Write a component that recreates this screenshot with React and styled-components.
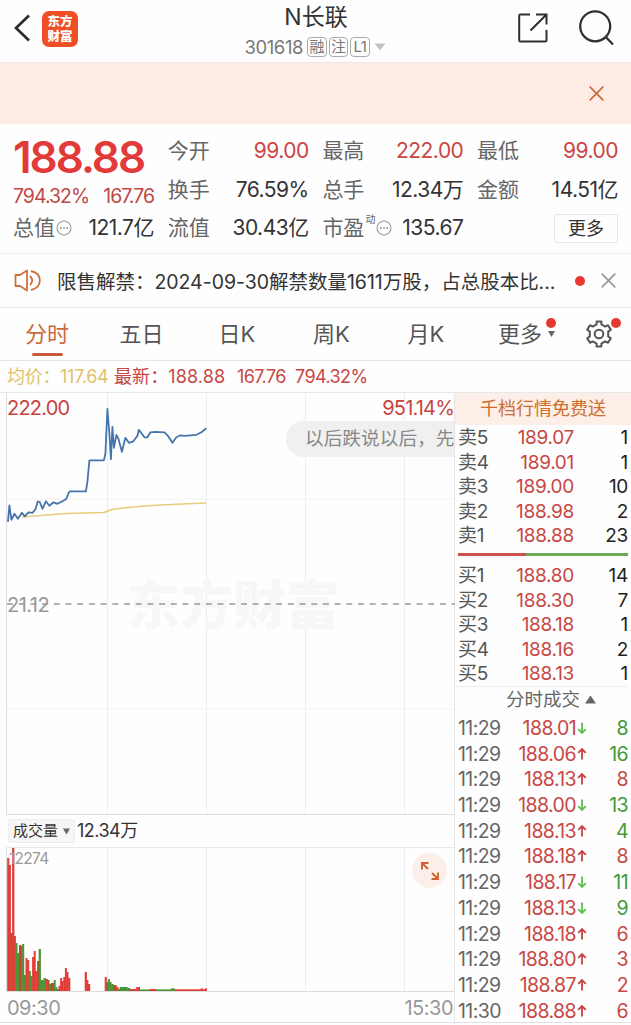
import styled, { createGlobalStyle } from 'styled-components'

const sells = [
  ['卖5', '189.07', '1'],
  ['卖4', '189.01', '1'],
  ['卖3', '189.00', '10'],
  ['卖2', '188.98', '2'],
  ['卖1', '188.88', '23'],
]

const buys = [
  ['买1', '188.80', '14'],
  ['买2', '188.30', '7'],
  ['买3', '188.18', '1'],
  ['买4', '188.16', '2'],
  ['买5', '188.13', '1'],
]

// time, price, direction, volume, volume colour
const trades = [
  ['11:29', '188.01', 'down', '8', 'green'],
  ['11:29', '188.06', 'up', '16', 'green'],
  ['11:29', '188.13', 'up', '8', 'red'],
  ['11:29', '188.00', 'down', '13', 'green'],
  ['11:29', '188.13', 'up', '4', 'green'],
  ['11:29', '188.18', 'up', '8', 'red'],
  ['11:29', '188.17', 'down', '11', 'green'],
  ['11:29', '188.13', 'down', '9', 'green'],
  ['11:29', '188.18', 'up', '6', 'red'],
  ['11:29', '188.80', 'up', '3', 'red'],
  ['11:29', '188.87', 'up', '2', 'red'],
  ['11:30', '188.88', 'up', '6', 'red'],
]

// x, width, height, colour
const bars = [
  [0.5, 1.7, 133, 'r'], [2.2, 1.6, 126, 'r'], [3.8, 1.6, 58, 'm'],
  [5.4, 1.9, 143, 'r'], [7.3, 1.5, 55, 'r'], [8.8, 1.6, 48, 'g'],
  [10.4, 1.8, 38, 'g'], [12.2, 1.7, 46, 'm'], [13.9, 1.6, 45, 'r'],
  [15.5, 1.6, 47, 'g'], [17.1, 1.7, 16, 'g'], [18.8, 1.6, 33, 'r'],
  [20.4, 1.7, 31, 'r'], [22.1, 1.6, 20, 'g'], [23.7, 1.7, 15, 'g'],
  [25.4, 1.6, 34, 'r'], [27, 1.6, 40, 'r'], [28.6, 1.8, 20, 'r'],
  [30.4, 1.6, 30, 'm'], [32, 1.8, 42, 'g'], [33.8, 3, 11, 'g'],
  [36.8, 2, 13, 'g'], [38.8, 2, 12, 'r'], [40.8, 1.6, 11, 'm'],
  [42.4, 1.6, 7, 'g'], [44, 3, 8, 'm'], [47, 1.6, 11, 'g'],
  [48.6, 1.6, 4, 'g'], [50.2, 1.6, 2, 'g'], [51.8, 1.6, 5, 'r'],
  [53.4, 1.6, 13, 'r'], [55, 1.6, 10, 'r'], [56.6, 1.6, 14, 'r'],
  [58.2, 1.6, 23, 'r'], [59.8, 1.6, 19, 'r'], [61.4, 1.8, 13, 'r'],
  [78, 1.8, 19, 'r'], [79.8, 1.5, 11, 'r'], [81.3, 1.8, 7, 'r'],
  [98, 1.7, 14, 'r'], [99.7, 1.4, 9, 'm'], [101.1, 1.7, 12, 'g'],
  [102.8, 1.7, 9, 'g'], [104.5, 2, 7, 'g'], [106.5, 3, 6, 'm'],
  [109.5, 2, 4, 'r'], [111.5, 1.6, 2, 'g'], [113.1, 7.4, 4, 'g'],
  [120.5, 2.6, 3, 'g'], [123.1, 6.4, 2, 'r'], [129.5, 3.4, 4, 'r'],
  [132.9, 10, 1.6, 'g'], [142.9, 6, 2, 'r'], [148.9, 15, 1.6, 'g'],
  [163.9, 4, 2.6, 'g'], [167.9, 26, 1.7, 'r'], [193.9, 2, 2.6, 'r'],
  [195.9, 2, 1.6, 'r'], [197.9, 2, 2.6, 'r'],
]

const barColors = { r: '#e23c38', g: '#479534', m: '#b5502d' }

const priceLine =
  'M1.5 124 L2 119 L3 107.5 L5 122 L8 116 L11.5 121 L15.5 115 L18.5 118.5 L22 114.5 L26 115 L29 111.5 L31.5 103.5 L33.5 104.5 L36 111 L39.5 103.5 L43 108 L47 104.5 L51 106 L57 103 L60 101 L62.5 94.5 L63.5 93.5 L79.5 93.5 L81 84 L83 62.5 L97.5 62.5 L99 56 L101 11 L103 36 L104.5 61.5 L106 29 L107.5 50 L110 37 L112 41 L115.5 54 L119 40 L122.5 45 L127 43.5 L131 38 L132.5 32 L138 39.5 L141 39.5 L144 34.5 L149 34 L158 34.5 L161.5 38 L166 45 L170 39.5 L174 37.5 L178 38 L190 37 L195 34.5 L200 30.5'

function App() {
  return (
    <>
      <GlobalStyle />
      <Page>
        <Header />
        <Banner>
          <Cross size={15} color='#cf6a43' />
        </Banner>
        <Stats />
        <Notice>
          <Speaker />
          <p>限售解禁：2024-09-30解禁数量1611万股，占总股本比...</p>
          <Dot $size={10} />
          <Cross size={15} color='#999' />
        </Notice>
        <Tabs />
        <Legend>
          <span className='avg'>均价：117.64</span>
          <span className='last'>最新：188.88</span>
          <span className='change'>167.76</span>
          <span className='rate'>794.32%</span>
        </Legend>
        <Main>
          <Charts />
          <OrderBook />
        </Main>
      </Page>
    </>
  )
}

const Header = () => (
  <TopBar>
    <svg width='17' height='28' viewBox='0 0 17 28' fill='none'>
      <path d='M15 1.5 L2 14 L15 26.5' stroke='#2b2b2b' strokeWidth='2.7' />
    </svg>
    <Logo>
      <span>东方</span>
      <span>财富</span>
    </Logo>
    <Title>
      <h1>N长联</h1>
      <div>
        <Code>301618</Code>
        <Tag>融</Tag>
        <Tag>注</Tag>
        <Tag>L1</Tag>
        <svg width='12' height='8'>
          <path d='M0.5 0.5 H11.5 L6 7.5Z' fill='#c4c4c4' />
        </svg>
      </div>
    </Title>
    <svg width='30' height='30' viewBox='0 0 30 30' fill='none' stroke='#2f2f2f' strokeWidth='2'>
      <path d='M12 1.5 H2.5 Q1.2 1.5 1.2 2.8 V27 Q1.2 28.5 2.5 28.5 H27 Q28.5 28.5 28.5 27 V17' />
      <path d='M18 1.5 H28.5 V11.5 M28 2 L12.5 17.5' />
    </svg>
    <svg width='36' height='36' viewBox='0 0 36 36' fill='none' stroke='#2f2f2f' strokeWidth='2.3'>
      <circle cx='16.2' cy='16.3' r='15' />
      <path d='M27 27.3 L34 34.5' />
    </svg>
  </TopBar>
)

const Info = () => (
  <InfoIcon width='16' height='16' fill='none'>
    <circle cx='8' cy='8' r='7' stroke='#999' strokeWidth='1.1' />
    <path d='M4 8 h1.6 M7.2 8 h1.6 M10.4 8 h1.6' stroke='#888' strokeWidth='1.5' />
  </InfoIcon>
)

const Stats = () => (
  <StatGrid>
    <PriceBox>
      <strong>188.88</strong>
      <div>
        <span>794.32%</span>
        <span>167.76</span>
      </div>
    </PriceBox>
    <Stat $red><label>今开</label><b>99.00</b></Stat>
    <Stat $red><label>最高</label><b>222.00</b></Stat>
    <Stat $red><label>最低</label><b>99.00</b></Stat>
    <Stat><label>换手</label><b>76.59%</b></Stat>
    <Stat><label>总手</label><b>12.34万</b></Stat>
    <Stat><label>金额</label><b>14.51亿</b></Stat>
    <Stat><label>总值<Info /></label><b>121.7亿</b></Stat>
    <Stat><label>流值</label><b>30.43亿</b></Stat>
    <Stat><label>市盈<sup>动</sup><Info /></label><b>135.67</b></Stat>
    <MoreButton>更多</MoreButton>
  </StatGrid>
)

const Tabs = () => (
  <TabBar>
    <Tab $active>分时</Tab>
    <Tab>五日</Tab>
    <Tab>日K</Tab>
    <Tab>周K</Tab>
    <Tab>月K</Tab>
    <Tab>
      更多
      <MoreMark>
        <Dot $size={10} />
        <svg width='7' height='6'>
          <path d='M0 0 H7 L3.5 6Z' fill='#666' />
        </svg>
      </MoreMark>
    </Tab>
    <Settings>
      <svg width='28' height='28' viewBox='0 0 28 28' fill='none' stroke='#555' strokeWidth='2' strokeLinejoin='round'>
        <path d='M11.6 1.5 H16.4 V4.4 L20.3 6.6 L23 5.2 L25.8 9.6 L23.2 11.6 V16.4 L25.8 18.4 L23 22.8 L20.3 21.4 L16.4 23.6 V26.5 H11.6 V23.6 L7.7 21.4 L5 22.8 L2.2 18.4 L4.8 16.4 V11.6 L2.2 9.6 L5 5.2 L7.7 6.6 L11.6 4.4Z' />
        <circle cx='14' cy='14' r='4.3' />
      </svg>
      <Dot $size={10} />
    </Settings>
  </TabBar>
)

const Charts = () => (
  <ChartColumn>
    <PriceChart>
      <svg width='448' height='421' fill='none'>
        <path d='M100.5 0 V421 M199.5 0 V421 M298.5 0 V421 M397.5 0 V421' stroke='#eeeeee' />
        <path d='M0 106 H448 M0 316 H448' stroke='#f2f2f2' />
        <text x='120' y='232' fontSize='53' fontWeight='900' fill='#f7f7f7'>东方财富</text>
        <path d='M0 211 H448' stroke='#999' strokeWidth='1.3' strokeDasharray='6 5.7' />
        <path d='M15 124 L27 123 L40 122 L60 120.5 L97 119.5 L105 116.5 L120 114.5 L145 112.5 L170 111.3 L199 110' stroke='#e6cc7d' strokeWidth='1.6' />
        <path d={priceLine} transform='translate(-0.6 4.8)' stroke='#4575ac' strokeWidth='1.8' strokeLinejoin='round' />
      </svg>
      <High>222.00</High>
      <Rate>951.14%</Rate>
      <Base>21.12</Base>
      <Tip>以后跌说以后，先</Tip>
    </PriceChart>
    <VolumeHead>
      <button>
        成交量
        <svg width='7' height='7'>
          <path d='M0 0.5 H7 L3.5 6.5Z' fill='#666' />
        </svg>
      </button>
      <span>12.34万</span>
    </VolumeHead>
    <VolumeChart>
      <svg width='448' height='143'>
        <path d='M100.5 0 V143 M199.5 0 V143 M298.5 0 V143 M397.5 0 V143' stroke='#eeeeee' />
        {bars.map(([x, w, h, c]) => (
          <rect key={x} x={x - 0.3} y={143 - h} width={w + 0.4} height={h} fill={barColors[c]} />
        ))}
        <text x='2' y='15.5' fontSize='15.5' letterSpacing='-0.7' fill='#999'>12274</text>
      </svg>
      <Expand>
        <svg width='18' height='18' viewBox='1 1 18 18' fill='none' stroke='#d2622f' strokeWidth='1.9'>
          <path d='M2 8.5 V2 H8.5 M2 2 L8 8 M18 11.5 V18 H11.5 M18 18 L12 12' />
        </svg>
      </Expand>
    </VolumeChart>
    <TimeAxis>
      <span>09:30</span>
      <span>15:30</span>
    </TimeAxis>
  </ChartColumn>
)

const Quotes = ({ rows }) => (
  <QuoteList>
    {rows.map(([name, price, count]) => (
      <Quote key={name}>
        <span>{name}</span>
        <b>{price}</b>
        <i>{count}</i>
      </Quote>
    ))}
  </QuoteList>
)

const OrderBook = () => (
  <Book>
    <Promo>千档行情免费送</Promo>
    <Quotes rows={sells} />
    <Ratio>
      <span />
      <span />
    </Ratio>
    <Quotes rows={buys} />
    <TradeHead>
      分时成交
      <svg width='11' height='9'>
        <path d='M0 8.5 H11 L5.5 0.5Z' fill='#666' />
      </svg>
    </TradeHead>
    {trades.map(([time, price, dir, count, color], index) => (
      <Trade key={index} $color={color}>
        <span>{time}</span>
        <b>{price}</b>
        <Arrow dir={dir} />
        <i>{count}</i>
      </Trade>
    ))}
  </Book>
)

const Arrow = ({ dir }) => (
  <svg width='10' height='14' fill='none' stroke={dir === 'up' ? '#c9403e' : '#5cc04c'} strokeWidth='1.8'>
    {dir === 'up' ? (
      <path d='M5 12.5 V2 M1.2 5.8 L5 2 L8.8 5.8' />
    ) : (
      <path d='M5 1.5 V12 M1.2 8.2 L5 12 L8.8 8.2' />
    )}
  </svg>
)

const Cross = ({ size, color }) => (
  <svg width={size} height={size} viewBox='0 0 15 15'>
    <path d='M0.7 0.7 L14.3 14.3 M14.3 0.7 L0.7 14.3' stroke={color} strokeWidth='1.7' />
  </svg>
)

const Speaker = () => (
  <svg width='27' height='23' viewBox='0 0 27 23' fill='none' stroke='#cd7040' strokeWidth='1.8'>
    <path d='M1.5 6 H6 L13 1.5 V21.5 L6 17 H1.5Z' strokeLinejoin='round' />
    <path d='M16 7 Q20.5 11.5 16 16 M17 2 Q25.8 4 25.8 11.5 Q25.8 19 17 21' />
  </svg>
)

export default App

const GlobalStyle = createGlobalStyle`
  * {
    box-sizing: border-box;
  }
  body {
    margin: 0;
    background: #fefefe;
    font-family: Inter, 'Noto Sans CJK SC', sans-serif;
    color: #333;
  }
  h1, p {
    margin: 0;
    font-weight: 400;
  }
  b, i {
    font-weight: 400;
    font-style: normal;
  }
  svg {
    display: block;
    flex-shrink: 0;
  }
  button {
    font-family: inherit;
    padding: 0;
  }
`

const Page = styled.div`
  width: 631px;
  height: 1025px;
  overflow: hidden;
  white-space: nowrap;
`

const TopBar = styled.header`
  display: grid;
  grid-template-columns: 17px 36px 1fr 30px 36px;
  grid-template-rows: 57px;
  column-gap: 11px;
  align-items: center;
  height: 63px;
  padding: 0 16px 5px 14px;
  border-bottom: 1px solid #e8e8e8;
  > svg {
    margin-bottom: 1px;
  }
  > svg:nth-last-child(2) {
    margin-left: -20px;
  }
`

const Logo = styled.div`
  display: flex;
  flex-direction: column;
  justify-content: center;
  align-items: center;
  width: 36px;
  height: 36px;
  border-radius: 7px;
  background: #f04f25;
  color: white;
  font-size: 12.5px;
  font-weight: 900;
  line-height: 15px;
`

const Title = styled.div`
  align-self: start;
  padding: 2px 0 0 14px;
  h1 {
    padding-left: 2px;
    font-size: 23px;
    line-height: 30px;
    text-align: center;
  }
  div {
    display: flex;
    align-items: center;
    justify-content: center;
    gap: 2px;
    height: 29px;
  }
  svg {
    margin-left: 2px;
  }
`

const Code = styled.span`
  margin-right: 2px;
  font-size: 18.5px;
  letter-spacing: -0.4px;
  color: #777;
`

const Tag = styled.span`
  display: flex;
  align-items: center;
  justify-content: center;
  width: 19.5px;
  height: 20px;
  border: 1px solid #aaa;
  border-radius: 4px;
  font-size: 15px;
  line-height: 18px;
  letter-spacing: -0.5px;
  color: #777;
`

const Banner = styled.div`
  display: flex;
  justify-content: flex-end;
  align-items: center;
  height: 61px;
  padding-right: 27px;
  background: #fcece3;
`

const StatGrid = styled.section`
  display: grid;
  grid-template-columns: repeat(4, 141px);
  grid-template-rows: repeat(3, 38.5px);
  column-gap: 13.7px;
  height: 130px;
  padding: 8px 12px 0 13px;
  border-bottom: 1px solid #eee;
`

const PriceBox = styled.div`
  grid-row: span 2;
  color: #bf4745;
  strong {
    display: block;
    height: 50px;
    font-size: 44px;
    font-weight: 600;
    line-height: 50px;
    letter-spacing: -2px;
    color: #e13a39;
  }
  div {
    display: flex;
    justify-content: space-between;
    font-size: 19.5px;
    line-height: 28px;
    letter-spacing: -1px;
  }
`

const Stat = styled.div`
  display: flex;
  justify-content: space-between;
  align-items: center;
  font-size: 21px;
  line-height: 38px;
  label {
    display: flex;
    align-items: center;
    color: #666;
  }
  b {
    letter-spacing: -0.5px;
    color: ${(props) => (props.$red ? '#cb4644' : '#333')};
  }
  sup {
    width: 10px;
    font-size: 10px;
    line-height: 10px;
    margin: -18px 0 0 1px;
  }
`

const InfoIcon = styled.svg`
  margin-left: 1px;
`

const MoreButton = styled.button`
  align-self: center;
  justify-self: end;
  width: 64px;
  height: 29px;
  background: #fefefe;
  border: 1px solid #e6e6e6;
  border-radius: 3px;
  font-size: 18px;
  line-height: 27px;
  color: #333;
`

const Notice = styled.section`
  display: flex;
  align-items: center;
  height: 54px;
  padding: 0 15px 0 14px;
  border-bottom: 1px solid #e6e6e6;
  p {
    flex: 1;
    margin: -1px 0 0 16px;
    font-size: 19.5px;
    letter-spacing: -0.02px;
  }
  > svg:last-child {
    margin-left: 16px;
  }
`

const Dot = styled.span`
  width: ${(props) => props.$size}px;
  height: ${(props) => props.$size}px;
  border-radius: 50%;
  background: #e93832;
`

const TabBar = styled.nav`
  display: grid;
  grid-template-columns: 94px 95px 96px 93px 96px 106px 1fr;
  height: 53px;
  border-bottom: 1px solid #e6e6e6;
`

const Tab = styled.div`
  position: relative;
  display: flex;
  justify-content: center;
  font-size: 22px;
  line-height: 52px;
  color: ${(props) => (props.$active ? '#cc6a40' : '#555')};
  &::after {
    content: '';
    display: ${(props) => (props.$active ? 'block' : 'none')};
    position: absolute;
    bottom: 4px;
    width: 31px;
    height: 3px;
    border-radius: 2px;
    background: #c8593b;
  }
`

const MoreMark = styled.div`
  display: flex;
  flex-direction: column;
  align-items: center;
  gap: 3px;
  padding: 10px 0 0 4px;
`

const Settings = styled.div`
  position: relative;
  padding: 12px 0 0 5px;
  span {
    position: absolute;
    top: 10px;
    left: 31px;
  }
`

const Legend = styled.div`
  display: flex;
  height: 32px;
  padding-left: 7px;
  border-bottom: 1px solid #e8e8e8;
  font-size: 18px;
  line-height: 32px;
  letter-spacing: -0.6px;
  color: #c84744;
  .avg {
    width: 107px;
    letter-spacing: -0.3px;
    color: #dfc26b;
  }
  .last {
    width: 123px;
    letter-spacing: 0.1px;
  }
  .change {
    width: 58px;
  }
`

const Main = styled.main`
  display: grid;
  grid-template-columns: 455px 176px;
  height: 630px;
  border-bottom: 1px solid #e0e0e0;
`

const ChartColumn = styled.div`
  padding-left: 6px;
  border-right: 1px solid #e6e6e6;
`

const PriceChart = styled.div`
  position: relative;
  height: 422px;
  border-left: 1px solid #ddd;
  border-bottom: 1px solid #ddd;
`

const ChartLabel = styled.span`
  position: absolute;
  font-size: 20px;
  line-height: 28px;
  letter-spacing: -0.8px;
  color: #c84340;
`

const High = styled(ChartLabel)`
  top: 1px;
  left: 0;
`

const Rate = styled(ChartLabel)`
  top: 1px;
  right: 0;
`

const Base = styled(ChartLabel)`
  top: 198px;
  left: 0;
  letter-spacing: -0.5px;
  color: #999;
`

const Tip = styled.div`
  position: absolute;
  top: 28px;
  right: 0;
  width: 168px;
  height: 36px;
  padding-left: 19px;
  border-radius: 18px 0 0 18px;
  background: rgba(238, 238, 238, 0.9);
  font-size: 18.7px;
  line-height: 36px;
  color: #888;
  overflow: hidden;
`

const VolumeHead = styled.div`
  display: flex;
  align-items: center;
  height: 33px;
  padding-left: 2px;
  border-bottom: 1px solid #e8e8e8;
  button {
    display: flex;
    align-items: center;
    justify-content: center;
    gap: 5px;
    width: 67px;
    height: 24px;
    border: 1px solid #eee;
    border-radius: 3px;
    background: #f6f6f6;
    font-size: 15px;
    line-height: 20px;
    color: #333;
  }
  span {
    margin-left: 2px;
    font-size: 18px;
    line-height: 32px;
    letter-spacing: -0.5px;
  }
`

const VolumeChart = styled.div`
  position: relative;
  height: 144px;
  border-left: 1px solid #ddd;
  border-bottom: 1px solid #ddd;
`

const Expand = styled.div`
  position: absolute;
  top: 5px;
  right: 7px;
  display: flex;
  align-items: center;
  justify-content: center;
  width: 35px;
  height: 35px;
  border-radius: 50%;
  background: #fcefe9;
`

const TimeAxis = styled.div`
  display: flex;
  justify-content: space-between;
  padding: 0 1px;
  font-size: 20px;
  line-height: 32px;
  letter-spacing: -0.5px;
  color: #999;
`

const Book = styled.aside`
  padding-right: 3px;
`

const Promo = styled.div`
  height: 32px;
  margin-right: -3px;
  background: #fcefe8;
  font-size: 18px;
  line-height: 31px;
  text-align: center;
  color: #cf6c2f;
`

const QuoteList = styled.div`
  height: 122.5px;
`

const Quote = styled.div`
  display: grid;
  grid-template-columns: 40px 76px 1fr;
  height: 24.6px;
  padding-left: 3px;
  font-size: 19px;
  line-height: 25px;
  letter-spacing: -0.3px;
  color: #555;
  b, i {
    text-align: right;
  }
  b {
    color: #c84744;
  }
  i {
    color: #222;
  }
`

const Ratio = styled.div`
  display: grid;
  grid-template-columns: 68px 102px;
  height: 15.5px;
  padding: 5.5px 0 7px 3px;
  span {
    background: #cd524b;
  }
  span + span {
    background: #6fa956;
  }
`

const TradeHead = styled.div`
  display: flex;
  align-items: center;
  justify-content: center;
  gap: 5px;
  height: 29.5px;
  padding: 0 0 2px 19px;
  border-top: 1px solid #eee;
  font-size: 18.5px;
  line-height: 25px;
  color: #666;
`

const Trade = styled.div`
  display: grid;
  grid-template-columns: 43px 75px 12px 1fr;
  align-items: center;
  height: 25.7px;
  padding-left: 3px;
  font-size: 19.5px;
  line-height: 26px;
  letter-spacing: -0.6px;
  color: #666;
  b {
    text-align: right;
    color: #c84744;
  }
  svg {
    margin-left: 1px;
  }
  i {
    text-align: right;
    color: ${(props) => (props.$color === 'green' ? '#3f9a37' : '#c84744')};
  }
`
